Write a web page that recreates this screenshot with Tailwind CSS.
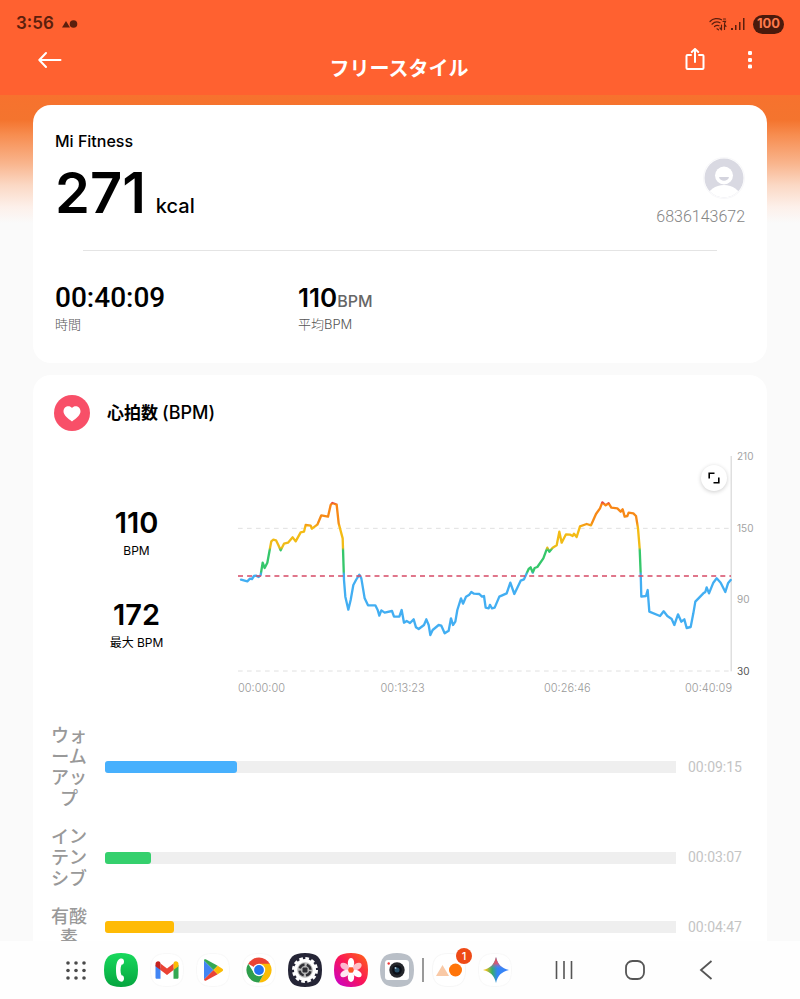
<!DOCTYPE html>
<html lang="ja">
<head>
<meta charset="utf-8">
<meta name="viewport" content="width=device-width, initial-scale=1">
<title>フリースタイル</title>
<script src="https://cdn.jsdelivr.net/npm/@tailwindcss/browser@4"></script>
</head>
<body class="flex h-screen flex-col overflow-hidden bg-[#fafafa] font-['Inter','Noto_Sans_CJK_JP',sans-serif] text-black">

<header class="h-[95px] shrink-0 bg-[#ff6130]">
  <div class="flex h-12 items-center justify-between px-4 text-[#5c1f0d]">
    <div class="flex items-center gap-2">
      <span class="text-[17px] font-semibold">3:56</span>
      <svg class="h-2 w-4" viewBox="0 0 16 8" fill="currentColor" aria-hidden="true"><path d="M0 7.500 4 1l4 6.500z"/><circle cx="11.500" cy="4" r="3.800"/></svg>
    </div>
    <div class="flex items-center gap-1">
      <svg class="h-4 w-[18px]" viewBox="0 0 18 16" fill="none" stroke="currentColor" stroke-width="1.200" stroke-linecap="round" aria-hidden="true"><path d="M1 5.500C4 2.300 9 1.800 12.500 3.800M3 8.200c2.500-2.400 5.500-2.700 8-1.400M5.500 10.500c1.500-1.300 3-1.500 4.500-.8M8 12.800l1.500 1"/><path d="M14.500 3h2M14 5.300h2.500l-1 2.200M12.500 13.500V9m-1.500 3 1.500 1.800M15.500 8.500v5m0-5 1.500 1.800"/></svg>
      <svg class="h-4 w-[14px]" viewBox="0 0 14 16" fill="currentColor" aria-hidden="true"><path d="M0 12h2v2H0zM4 9h1.500v5H4zM8 6h1.500v8H8zM12 2h1.500v12H12z"/></svg>
      <span class="ml-1 flex h-[19px] w-[31px] items-center justify-center rounded-full bg-[#4a1a0c] text-[13px] font-bold text-[#ff7a4c]">100</span>
    </div>
  </div>
  <div class="grid grid-cols-[1fr_auto_1fr] items-start pr-10 pl-[38px] text-white">
    <button type="button" aria-label="戻る" class="flex h-6 w-6 items-center justify-center">
      <svg class="h-6 w-6" viewBox="0 0 24 24" fill="none" stroke="currentColor" stroke-width="2" stroke-linecap="round" stroke-linejoin="round"><path d="M22.500 12H1.500M8 5 1.300 12 8 19"/></svg>
    </button>
    <h1 class="text-[20px] leading-[43px] font-bold">フリースタイル</h1>
    <div class="flex justify-end gap-[33px]">
      <button type="button" aria-label="共有" class="flex h-6 w-6 items-center justify-center">
        <svg class="h-6 w-6" viewBox="0 0 24 24" fill="none" stroke="currentColor" stroke-width="2" stroke-linecap="round" stroke-linejoin="round"><path d="M8 7H4.500C3.800 7 3.500 7.300 3.500 8v12c0 .7.300 1 1 1h15c.7 0 1-.3 1-1V8c0-.7-.3-1-1-1H16M12 14V1.500M8.800 4 12 .9 15.200 4"/></svg>
      </button>
      <button type="button" aria-label="メニュー" class="flex h-6 w-5 items-center justify-center">
        <svg class="h-6 w-5" viewBox="0 0 20 24" fill="currentColor"><rect x="8" y="3" width="4" height="4" rx="1.300"/><rect x="8" y="10" width="4" height="4" rx="1.300"/><rect x="8" y="16.500" width="4" height="4" rx="1.300"/></svg>
      </button>
    </div>
  </div>
</header>

<main class="min-h-0 flex-1 overflow-hidden bg-[linear-gradient(to_bottom,#f7722e_0px,#f4742e_25px,#f78d50_40px,#f9b48c_68px,#fbd8c4_90px,#fdf0ea_112px,#fafafa_128px)] px-[33px] pt-[10px]">
  <section class="rounded-[18px] bg-white px-[22px] pt-6 pb-[29px]">
    <div class="flex items-start justify-between">
      <div>
        <h2 class="text-[16px] leading-6 font-medium">Mi Fitness</h2>
        <p class="mt-[10px] flex items-baseline gap-[10px]"><span class="text-[56px] leading-[60px] font-semibold">271</span><span class="text-[20px] font-medium">kcal</span></p>
      </div>
      <div class="flex flex-col items-end pt-7">
        <svg class="h-[42px] w-[42px]" viewBox="0 0 42 42" role="img" aria-label="プロフィール"><defs><clipPath id="face"><circle cx="21" cy="21" r="19.500"/></clipPath></defs><circle cx="21" cy="21" r="20.500" fill="#fff" stroke="#f8f8fa"/><g clip-path="url(#face)"><rect width="42" height="42" fill="#d9d9e2"/><circle cx="21" cy="18.500" r="9" fill="#fff"/><ellipse cx="21" cy="40" rx="16" ry="12" fill="#fff"/></g><path d="M16 20h10c-.8 5-9.200 5-10 0z" fill="#d4d4de"/></svg>
        <span class="mt-[6px] font-['Roboto',sans-serif] text-[16px] leading-6 font-light text-[#858585]">6836143672</span>
      </div>
    </div>
    <hr class="mx-7 mt-[21px] border-[#e4e4e4]">
    <dl class="mt-[31px] grid grid-cols-[243px_1fr]">
      <div class="flex flex-col">
        <dd class="order-1 h-8 font-['Roboto',sans-serif] text-[28px] leading-8 font-medium">00:40:09</dd>
        <dt class="order-2 text-[13px] leading-5 font-light text-[#555]">時間</dt>
      </div>
      <div class="flex flex-col">
        <dd class="order-1 flex h-8 items-baseline text-[26px] leading-8 font-semibold">110<span class="text-[16px] font-medium text-[#666]">BPM</span></dd>
        <dt class="order-2 text-[13px] leading-5 font-light text-[#555]">平均BPM</dt>
      </div>
    </dl>
  </section>

  <section class="mt-3 rounded-[18px] bg-white pt-5 pb-6">
    <div class="flex items-center gap-[17px] px-[21px]">
      <svg class="h-9 w-9" viewBox="0 0 36 36" aria-hidden="true"><circle cx="18" cy="18" r="18" fill="#f84f68"/><path d="M18 26.500c-4-3-8.500-6.200-8.500-10.200 0-5.500 6.300-6.600 8.500-3.300 2.200-3.300 8.500-2.200 8.500 3.300 0 4-4.500 7.200-8.500 10.200z" fill="#fff"/></svg>
      <h2 class="text-[17px] leading-6 font-bold">心拍数 <span class="text-[18px] font-medium">(BPM)</span></h2>
    </div>

    <div class="mt-[25px] flex pr-[11px]">
      <dl class="flex w-[205px] shrink-0 flex-col gap-9 pt-[51px] pl-[2px] text-center">
        <div class="flex flex-col-reverse"><dt class="text-[12px] leading-6">BPM</dt><dd class="text-[29px] leading-8 font-semibold">110</dd></div>
        <div class="flex flex-col-reverse"><dt class="text-[12px] leading-6">最大 BPM</dt><dd class="text-[29px] leading-8 font-semibold">172</dd></div>
      </dl>
      <div class="relative min-w-0 flex-1">
        <svg class="block h-[216px] w-full" viewBox="24 48 1482 648" preserveAspectRatio="none" role="img" aria-label="心拍数グラフ">
          <defs>
            <linearGradient id="zone" gradientUnits="userSpaceOnUse" x1="0" y1="180" x2="0" y2="600">
              <stop offset="0" stop-color="#e8493e"/><stop offset=".018" stop-color="#e8493e"/>
              <stop offset=".03" stop-color="#f98514"/><stop offset=".16" stop-color="#f58c18"/>
              <stop offset=".2" stop-color="#f6bb12"/><stop offset=".34" stop-color="#eebb18"/>
              <stop offset=".36" stop-color="#35c76b"/><stop offset=".51" stop-color="#35c76b"/>
              <stop offset=".53" stop-color="#42aef2"/><stop offset="1" stop-color="#42aef2"/>
            </linearGradient>
          </defs>
          <g fill="none" stroke="#e0e0e0" stroke-width="3">
            <path d="M24 265H1503M24 693H1503" stroke-dasharray="14 13"/>
            <path d="M1503.500 48V694" stroke="#cfcfcf"/>
          </g>
          <g fill="none" stroke="url(#zone)" stroke-width="7" stroke-linejoin="round" stroke-linecap="round">
            <path d="M33 419 52 424 60 416 66 417 72 408 78 407 86 411 92 405 98 368 104 384 112 368 120 325 124 304 130 299 138 301 145 315 152 331 162 311 174 308 188 292 197 304 212 277 222 275 227 255 242 257 246 266 262 254 274 226 294 230 302 195 307 189 320 194 326 250 338 295 342 420 346 470 355 509 362 480 370 435 378 420 388 404 394 415 404 475 414 496 436 496 443 510 448 527 454 511 464 518 486 513 492 530 508 530 515 510 522 548 530 543 540 549 551 538 558 562 566 567 582 555 589 538 596 555 601 585 608 570 626 555 634 557 644 580 656 572 663 535 669 555 676 545 682 510 693 475 699 491 708 470 718 464 724 456 732 461 748 462 756 470 762 468 767 503 776 505 780 495"/>
            <path transform="translate(780)" d="M0 495 6 505 14 503 28 470 50 460 61 428 73 462 92 422 102 418 116 387 122 382 128 398 134 384 142 381 160 355 172 323 178 335 188 323 200 316 208 275 215 308 228 283 240 284 248 288 252 281 260 291 270 259 290 252 303 256 318 222 330 205 337 187 347 196 356 190 364 203 382 205 392 215 398 208 404 230 412 228 416 218 430 220 438 228 444 265 449 325 452 400 454 470 468 468 473 450 478 515 510 528 521 514 532 528 545 537 553 555 564 523 574 545 583 538 590 564 602 561 610 520 616 485 640 460 646 456 650 442 657 460 670 428 680 415 692 428 706 456 714 430 722 420"/>
          </g>
          <path d="M24 408H1503" fill="none" stroke="#d64a66" stroke-width="4" stroke-dasharray="15 12.300"/>
        </svg>
        <div class="mt-2 grid grid-cols-6 text-[11px] leading-4 font-light text-[#999]">
          <span>00:00:00</span><span class="col-span-2 text-center">00:13:23</span><span class="col-span-2 text-center">00:26:46</span><span class="text-right">00:40:09</span>
        </div>
        <button type="button" aria-label="全画面表示" class="absolute top-[9px] right-[5px] flex h-[26px] w-[26px] items-center justify-center rounded-full bg-white shadow-[0_1px_4px_rgba(0,0,0,0.2)]">
          <svg class="h-3 w-3" viewBox="0 0 12 12" fill="none" stroke="#000" stroke-width="1.600"><path d="M1.200 6.500V1.200h5.300M10.800 5.500v5.300H5.500"/></svg>
        </button>
      </div>
      <div class="-mt-2 flex h-[231px] w-6 shrink-0 flex-col justify-between pl-[5px] text-[10px] leading-4 text-[#a3a3a3]">
        <span>210</span><span>150</span><span>90</span><span class="text-[#555]">30</span>
      </div>
    </div>

    <ul class="mt-[29px] flex flex-col gap-[17px] pr-[22px] pl-[18px] text-[18px] leading-[21px] font-medium text-[#999]">
      <li class="flex items-center">
        <span class="w-9 shrink-0 text-center">ウォ<br>ーム<br>アッ<br>プ</span>
        <div class="ml-[18px] h-3 flex-1 rounded-l-[3px] bg-[#efefef]"><div class="h-full rounded-[3px] bg-[#47b0fd]" style="width:23.1%"></div></div>
        <span class="ml-3 w-[57px] font-['Roboto',sans-serif] text-[14px] font-normal text-[#c4c4c4]">00:09:15</span>
      </li>
      <li class="flex items-center">
        <span class="w-9 shrink-0 text-center">イン<br>テン<br>シブ</span>
        <div class="ml-[18px] h-3 flex-1 rounded-l-[3px] bg-[#efefef]"><div class="h-full rounded-[3px] bg-[#35d06d]" style="width:8.1%"></div></div>
        <span class="ml-3 w-[57px] font-['Roboto',sans-serif] text-[14px] font-normal text-[#c4c4c4]">00:03:07</span>
      </li>
      <li class="flex items-center">
        <span class="w-9 shrink-0 text-center">有酸<br>素</span>
        <div class="ml-[18px] h-3 flex-1 rounded-l-[3px] bg-[#efefef]"><div class="h-full rounded-[3px] bg-[#ffbb05]" style="width:12.1%"></div></div>
        <span class="ml-3 w-[57px] font-['Roboto',sans-serif] text-[14px] font-normal text-[#c4c4c4]">00:04:47</span>
      </li>
    </ul>
  </section>
</main>

<nav class="flex h-[58px] shrink-0 items-center justify-between bg-[#fefefe] pr-[82px] pl-[58px]" aria-label="タスクバー">
  <div class="flex items-center gap-3">
    <button type="button" aria-label="アプリ一覧" class="h-[34px] w-[34px]">
      <svg viewBox="0 0 34 34" fill="#4a4a4a"><circle cx="10" cy="10" r="1.800"/><circle cx="18" cy="10" r="1.800"/><circle cx="26" cy="10" r="1.800"/><circle cx="10" cy="17.500" r="1.800"/><circle cx="18" cy="17.500" r="1.800"/><circle cx="26" cy="17.500" r="1.800"/><circle cx="10" cy="25" r="1.800"/><circle cx="18" cy="25" r="1.800"/><circle cx="26" cy="25" r="1.800"/></svg>
    </button>
    <button type="button" aria-label="電話" class="h-[34px] w-[34px]">
      <svg viewBox="0 0 34 34"><defs><linearGradient id="tel" x1="0" y1="0" x2="0" y2="1"><stop stop-color="#18d95c"/><stop offset="1" stop-color="#05a53f"/></linearGradient></defs><path d="M17 0C29 0 34 4.500 34 17S29 34 17 34 0 29.500 0 17 5 0 17 0z" fill="url(#tel)"/><path d="M16.500 5.500c2-.5 3.500.5 3.500 3s-1 3-2.500 3.200c-1.300 3-1.300 7.600 0 10.600 1.500.2 2.500.7 2.500 3.200s-1.500 3.500-3.500 3c-3-.8-4.500-5-4.500-11.500s1.500-10.700 4.500-11.500z" fill="#fff"/></svg>
    </button>
    <button type="button" aria-label="Gmail" class="h-[34px] w-[34px]">
      <svg viewBox="0 0 34 34"><path d="M17 .5C29 .5 33.500 5 33.500 17S29 33.500 17 33.500.5 29 .5 17 5 .5 17 .5z" fill="#fff" stroke="#f8f8f8"/><path d="M5.500 12v12.500c0 .8.500 1.300 1.300 1.300h3.700V15z" fill="#4285f4"/><path d="M28.500 12v12.500c0 .8-.5 1.300-1.300 1.300h-3.700V15z" fill="#34a853"/><path d="M23.500 10.500V17l5-3.800V11c0-2.500-2.800-3.500-4.500-2z" fill="#fbbc04"/><path d="m10.500 10.500 6.500 4.900 6.500-4.900V17L17 22l-6.500-5z" fill="#ea4335"/><path d="M5.500 11v2.200l5 3.800v-6.500L10 9c-1.700-1.500-4.500-.5-4.500 2z" fill="#c5221f"/></svg>
    </button>
    <button type="button" aria-label="Playストア" class="h-[34px] w-[34px]">
      <svg viewBox="0 0 34 34"><path d="M17 .5C29 .5 33.500 5 33.500 17S29 33.500 17 33.500.5 29 .5 17 5 .5 17 .5z" fill="#fff" stroke="#f8f8f8"/><path d="M8 7.500v19L17.500 17z" fill="#4285f4"/><path d="M8 7.500 17.500 17l4.200-4.200L10.200 6.600C9 6 8 6.500 8 7.500z" fill="#34a853"/><path d="M8 26.500 17.500 17l4.200 4.200-11.500 6.200c-1.200.6-2.200.1-2.200-.9z" fill="#ea4335"/><path d="M17.500 17l4.200-4.200 4.300 2.700c1.500.9 1.500 2.100 0 3l-4.300 2.700z" fill="#fbbc04"/></svg>
    </button>
    <button type="button" aria-label="Chrome" class="h-[34px] w-[34px]">
      <svg viewBox="0 0 34 34"><path d="M17 .5C29 .5 33.500 5 33.500 17S29 33.500 17 33.500.5 29 .5 17 5 .5 17 .5z" fill="#fff" stroke="#f8f8f8"/><path d="M17 17 6.200 10.700a12.500 12.500 0 0 1 21.600 0z" fill="#ea4335"/><path d="M17 10.700h10.800A12.500 12.500 0 0 1 17 29.500l5-9z" fill="#fbbc04"/><path d="M6.200 10.700A12.500 12.500 0 0 0 17 29.500l5.300-9.400L17 22l-5-2z" fill="#2e9e4b"/><circle cx="17" cy="17" r="6.200" fill="#fff"/><circle cx="17" cy="17" r="4.900" fill="#2374ee"/></svg>
    </button>
    <button type="button" aria-label="設定" class="h-[34px] w-[34px]">
      <svg viewBox="0 0 34 34"><path d="M17 0C29 0 34 4.500 34 17S29 34 17 34 0 29.500 0 17 5 0 17 0z" fill="#252536"/><circle cx="17" cy="17" r="11" fill="#fff"/><circle cx="17" cy="17" r="11.500" fill="none" stroke="#fff" stroke-width="3" stroke-dasharray="3.600 2.420"/><circle cx="17" cy="17" r="7.800" fill="#b8b8b8"/><circle cx="17" cy="17" r="5.500" fill="none" stroke="#303035" stroke-width="2.400" stroke-dasharray="6.300 2.340" transform="rotate(12 17 17)"/><rect x="14.500" y="14.500" width="5" height="5" rx="1" fill="#303035"/></svg>
    </button>
    <button type="button" aria-label="ギャラリー" class="h-[34px] w-[34px]">
      <svg viewBox="0 0 34 34"><defs><linearGradient id="gal" x1="0" y1="1" x2="1" y2="0"><stop stop-color="#c300d8"/><stop offset=".5" stop-color="#fa1557"/><stop offset="1" stop-color="#ff6a12"/></linearGradient></defs><path d="M17 0C29 0 34 4.500 34 17S29 34 17 34 0 29.500 0 17 5 0 17 0z" fill="url(#gal)"/><g fill="#fff"><ellipse cx="17" cy="10" rx="3.200" ry="5"/><ellipse cx="17" cy="10" rx="3.200" ry="5" transform="rotate(60 17 17)" opacity=".7"/><ellipse cx="17" cy="10" rx="3.200" ry="5" transform="rotate(120 17 17)"/><ellipse cx="17" cy="10" rx="3.200" ry="5" transform="rotate(180 17 17)"/><ellipse cx="17" cy="10" rx="3.200" ry="5" transform="rotate(240 17 17)" opacity=".9"/><ellipse cx="17" cy="10" rx="3.200" ry="5" transform="rotate(300 17 17)" opacity=".7"/></g><circle cx="17" cy="17" r="2.700" fill="#fb5a24"/></svg>
    </button>
    <button type="button" aria-label="カメラ" class="h-[34px] w-[34px]">
      <svg viewBox="0 0 34 34"><path d="M17 0C29 0 34 4.500 34 17S29 34 17 34 0 29.500 0 17 5 0 17 0z" fill="#b9bfc7"/><rect x="5" y="7" width="24" height="20" rx="3" fill="#fff"/><circle cx="17" cy="17" r="7.700" fill="#24262b"/><circle cx="17" cy="17" r="4.800" fill="#0c1018"/><circle cx="17" cy="17" r="2.500" fill="#285069"/><circle cx="15.500" cy="15" r="1" fill="#a8c6da"/><circle cx="8.700" cy="10.500" r="1.200" fill="#e33"/></svg>
    </button>
    <span class="-mx-1 h-6 w-0.5 bg-[#999]"></span>
    <button type="button" aria-label="最近のアプリ 通知1件" class="relative h-[34px] w-[34px]">
      <svg viewBox="0 0 34 34"><path d="M17 .5C29 .5 33.500 5 33.500 17S29 33.500 17 33.500.5 29 .5 17 5 .5 17 .5z" fill="#fff" stroke="#f6f6f6"/><path d="m4 23 6.500-11L17 23z" fill="#f9c9a6"/><circle cx="23.500" cy="17" r="6.500" fill="#ff7409"/></svg>
      <span class="absolute -top-[5px] -right-[6px] flex h-4 w-4 items-center justify-center rounded-full bg-[#ee4a16] text-[11px] font-medium text-white">1</span>
    </button>
    <button type="button" aria-label="Gemini" class="h-[34px] w-[34px]">
      <svg viewBox="0 0 34 34"><defs><linearGradient id="g1" x1="0" y1="0" x2="1" y2="0"><stop stop-color="#fbc312"/><stop offset=".12" stop-color="#e6c020"/><stop offset=".35" stop-color="#35ad68"/><stop offset=".55" stop-color="#3186f5"/><stop offset="1" stop-color="#3e82f8"/></linearGradient><linearGradient id="g2" x1="0" y1="0" x2="0" y2="1"><stop stop-color="#f04848"/><stop offset=".25" stop-color="#e8536a" stop-opacity=".85"/><stop offset=".45" stop-color="#6a7ef0" stop-opacity="0"/></linearGradient></defs><path d="M17 .5C29 .5 33.500 5 33.500 17S29 33.500 17 33.500.5 29 .5 17 5 .5 17 .5z" fill="#fff" stroke="#f8f8f8"/><path d="M18 4c1.800 7.500 5.500 11.200 13 13-7.500 1.800-11.200 5.500-13 13-1.800-7.500-5.500-11.200-13-13C12.500 15.200 16.200 11.500 18 4z" fill="url(#g1)"/><path d="M18 4c1.800 7.500 5.500 11.200 13 13-7.500 1.800-11.200 5.500-13 13-1.800-7.500-5.500-11.200-13-13C12.500 15.200 16.200 11.500 18 4z" fill="url(#g2)"/></svg>
    </button>
  </div>
  <div class="flex items-center gap-[47px]">
    <button type="button" aria-label="履歴" class="h-6 w-6"><svg viewBox="0 0 24 24" fill="none" stroke="#555" stroke-width="1.600"><path d="M4.500 3v18M12 3v18M19.500 3v18"/></svg></button>
    <button type="button" aria-label="ホーム" class="h-6 w-6"><svg viewBox="0 0 24 24" fill="none" stroke="#555" stroke-width="1.800"><rect x="3" y="3" width="18" height="18" rx="6.500"/></svg></button>
    <button type="button" aria-label="戻る" class="h-6 w-6"><svg viewBox="0 0 24 24" fill="none" stroke="#555" stroke-width="1.800"><path d="M17.500 3 7 12l10.500 9"/></svg></button>
  </div>
</nav>
</body>
</html>
